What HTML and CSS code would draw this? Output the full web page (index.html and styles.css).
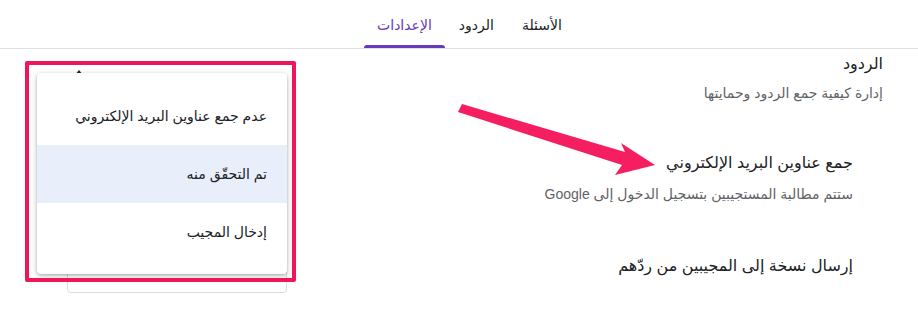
FILE: index.html
```html
<!DOCTYPE html>
<html lang="ar" dir="rtl">
<head>
<meta charset="utf-8">
<link rel="stylesheet" href="styles.css">
</head>
<body>
<header class="tabs">
  <nav class="tab-list">
    <span class="tab">الأسئلة</span>
    <span class="tab">الردود</span>
    <span class="tab active">الإعدادات</span>
  </nav>
</header>
<main class="content">
  <section class="settings">
    <div class="section-head">
      <div class="title">الردود</div>
      <div class="sub">إدارة كيفية جمع الردود وحمايتها</div>
    </div>
    <div class="row row-email">
      <div class="title">جمع عناوين البريد الإلكتروني</div>
      <div class="sub">ستتم مطالبة المستجيبين بتسجيل الدخول إلى Google</div>
    </div>
    <div class="row row-copy">
      <div class="title">إرسال نسخة إلى المجيبين من ردّهم</div>
    </div>
  </section>
  <aside class="picker">
    <div class="select-box"></div>
    <span class="caret"></span>
    <div class="menu">
      <div class="menu-item">عدم جمع عناوين البريد الإلكتروني</div>
      <div class="menu-item selected">تم التحقّق منه</div>
      <div class="menu-item">إدخال المجيب</div>
    </div>
  </aside>
</main>
<div class="highlight-frame"></div>
<svg class="pointer" width="918" height="316" viewBox="0 0 918 316">
  <polygon fill="#f51e61" points="462,104 625,152 621,143 655,165 615,175 622,165 458,112"/>
</svg>
</body>
</html>
```
FILE: styles.css
```css
* { box-sizing: border-box; }
html, body {
  margin: 0;
  padding: 0;
  background: #fff;
  width: 918px;
  height: 316px;
  overflow: hidden;
  font-family: "Liberation Sans", "DejaVu Sans", sans-serif;
  color: #202124;
  position: relative;
}
.tabs {
  height: 49px;
  border-bottom: 1px solid #e0e0e0;
  display: flex;
  justify-content: center;
  padding-left: 22px;
}
.tab-list {
  display: flex;
  height: 48px;
}
.tab {
  position: relative;
  padding: 0 14px;
  font-size: 14px;
  line-height: 50px;
  color: #202124;
  height: 48px;
}
.tab.active {
  color: #673ab7;
  padding: 0 13px;
}
.tab.active::after {
  content: "";
  position: absolute;
  left: 0;
  right: 0;
  bottom: 0;
  height: 3px;
  background: #673ab7;
  border-radius: 3px 3px 0 0;
}
.content {
  display: flex;
  justify-content: space-between;
  padding-right: 35px;
}
.settings {
  display: flex;
  flex-direction: column;
}
.title {
  font-size: 16px;
  line-height: 20px;
  color: #202124;
}
.sub {
  font-size: 14px;
  line-height: 20px;
  color: #5f6368;
}
.section-head {
  padding-top: 5px;
}
.section-head .sub { margin-top: 9px; }
.row { padding-right: 30px; }
.row-email { margin-top: 50px; }
.row-email .sub { margin-top: 11px; }
.row-copy { margin-top: 52px; }
.picker {
  position: relative;
  width: 220px;
  margin-left: 67px;
}
.select-box {
  margin-top: 200px;
  height: 44px;
  border: 1px solid #dadce0;
  border-radius: 4px;
}
.caret {
  position: absolute;
  left: 8px;
  top: 21px;
  width: 0;
  height: 0;
  border-left: 4px solid transparent;
  border-right: 4px solid transparent;
  border-bottom: 5px solid #202124;
}
.menu {
  position: absolute;
  left: -30px;
  top: 24px;
  width: 250px;
  height: 201px;
  background: #fff;
  border-radius: 4px;
  box-shadow: 0 1px 3px rgba(60, 64, 67, 0.35), 0 3px 8px rgba(60, 64, 67, 0.18);
  padding: 14px 0 13px;
}
.menu-item {
  height: 58px;
  line-height: 58px;
  padding-right: 20px;
  font-size: 14px;
  color: #202124;
}
.menu-item.selected { background: #e8effa; }
.highlight-frame {
  position: absolute;
  left: 25px;
  top: 61px;
  width: 271px;
  height: 221px;
  border: 4px solid #ee1559;
  border-radius: 2px;
}
.pointer {
  position: absolute;
  left: 0;
  top: 0;
  pointer-events: none;
}
```
